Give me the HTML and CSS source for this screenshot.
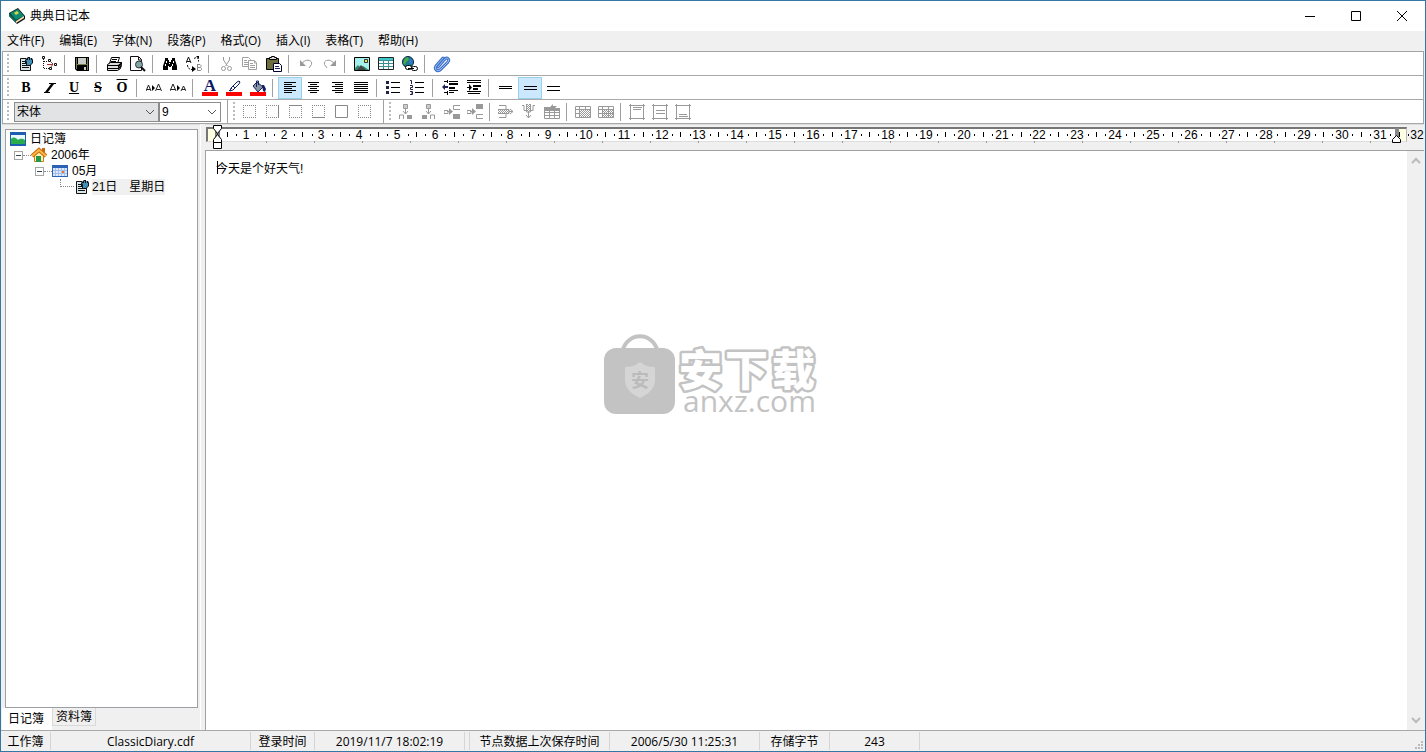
FILE: index.html
```html
<!DOCTYPE html>
<html lang="zh-CN">
<head>
<meta charset="utf-8">
<title>典典日记本</title>
<link rel="stylesheet" href="styles.css">
</head>
<body>
<svg class="defs" aria-hidden="true">
  <defs>
    <pattern id="dither" width="2" height="2" patternUnits="userSpaceOnUse"><path fill="#999" d="M0 0h1v1h-1zM1 1h1v1h-1z"/></pattern>
  </defs>
  <symbol id="i-book" viewBox="0 0 18 18"><path fill="#111" d="M1 6L10 1l7 8v3l-8 5-8-8z"/><path fill="#0d8a72" d="M2 6l8-4 6 7-8 4z"/><path fill="#f4e9b8" d="M8 14l8-5v2l-8 5z"/><path fill="#0a6b5b" d="M1 6l7 7v3L1 9z"/><path fill="#d8d24a" d="M6 6l3-2 2 2-3 2z"/></symbol>
  <symbol id="i-note" viewBox="0 0 16 16"><path fill="#d9e6ea" d="M2 2h11v12H2z"/><path fill="none" stroke="#111" d="M8 2.500H2.500v12h10V9M4 5.500h4M4 7.500h4M4 9.500h5M4 11.500h7"/><path fill="#111" d="M7 4l2-2 1-1h2v1h2l1 2v3l-3 3H8V8H7z"/><path fill="#3f8fb8" d="M8 4h2V2h1v2h1V2h1v2h1v3l-2 2H9V6z"/></symbol>
  <symbol id="i-tree" viewBox="0 0 16 16"><g fill="none" stroke="#111"><path d="M.5.5h2v2h-2zM6.500 3.500h2v2h-2zM12.500 7.500h2v2h-2zM7.500 11.500h2v2h-2z"/><path stroke-dasharray="1 1" d="M1.500 3v10M2 5.500h4M2 12.500h5"/></g><path stroke="#a33" fill="none" d="M5 8.500h6M9 6l2 2-2 3"/></symbol>
  <symbol id="i-save" viewBox="0 0 16 16"><path d="M1 1h14v14H3l-2-2z"/><path fill="#777b46" d="M2 2h1v11H2zM13 2h1v12h-1zM3 8h10v1H3z"/><path fill="#c9cdca" d="M4 2h8v6H4z"/><path fill="#ccc" d="M10 11h2v3h-2z"/></symbol>
  <symbol id="i-print" viewBox="0 0 16 16"><path fill="#fff" stroke="#000" d="M5.500 1.500h8l-2 6h-8z"/><path stroke="#000" d="M6 3.500h5M5 5.500h5"/><path fill="#ddd" stroke="#000" d="M1.500 8.500l3-2h11l-1 6-3 2h-10z"/><path d="M1 9h11v1H1zM12 9l4-3v2l-4 4zM2 12h10v1H2zM12 12l4-3v1l-4 4z"/></symbol>
  <symbol id="i-preview" viewBox="0 0 16 16"><path fill="#fff" stroke="#111" d="M.5.5h8l3 3v11H.5z"/><path fill="none" stroke="#111" d="M8.500 1v3h3"/><circle cx="9" cy="8.500" r="3.500" fill="#82a5a7" stroke="#333"/><path stroke="#111" stroke-width="2" d="M11 11l4 4"/></symbol>
  <symbol id="i-find" viewBox="0 0 16 16"><path d="M3 2h3v2h1v2h2V4h1V2h3v2l1 3 1 3v4h-5v-4H9v1H7v-1H6v4H1v-4l1-3 1-3z"/><path fill="#fff" d="M4 5h1v2h-1zM3 8h1v2h-1zM11 5h1v2h-1zM10 8h1v2h-1zM7 7h1v1h-1z"/></symbol>
  <symbol id="i-replace" viewBox="0 0 16 16"><path fill="none" stroke="#111" d="M0 7l2.500-6L5 7M1 5.500h3"/><path fill="none" stroke="#888" d="M11.500 8.500v6h3l1-1v-1l-1-1h-3M14 11.500l1-1v-1l-1-1h-3"/><path fill="none" stroke="#111" stroke-dasharray="2 1" d="M8 2.500c3-2 5 0 4.500 3M1.500 9c0 3 2 5 6 4.500"/><path d="M10 0h3v3zM6 10l4 3-4 3z"/></symbol>
  <symbol id="i-cut" viewBox="0 0 16 16"><g fill="none" stroke="#999"><path d="M5.500 1v3l4 6M11.500 1v3l-4 6"/><circle cx="5.500" cy="12.500" r="2"/><circle cx="11.500" cy="12.500" r="2"/></g></symbol>
  <symbol id="i-copy" viewBox="0 0 16 16"><g fill="#fff" stroke="#a0a0a0"><path d="M.5 1.500h6l2 2v7h-8z"/><path d="M6.500 4.500h6l2 2v7h-8z"/><path d="M2 4.500h3M2 6.500h4M2 8.500h4M8 7.500h3M8 9.500h5M8 11.500h5M12.500 5v2h2"/></g></symbol>
  <symbol id="i-paste" viewBox="0 0 16 16"><path fill="#6e6e3c" stroke="#000" d="M.5 2.500h12v11H.5z"/><path fill="#ddd" stroke="#000" d="M3.500 3.500v-2h2V.5h3v1h2v2z"/><path fill="#fff" stroke="#003" d="M7.500 7.500h6l2 2v6h-8z"/><path stroke="#226" d="M9 10.500h4M9 12.500h5"/></symbol>
  <symbol id="i-undo" viewBox="0 0 16 16"><path fill="none" stroke="#999" d="M4 7.500c3-5 11-4 9.500 1L11 12"/><path fill="#999" d="M2 4v6h6z"/></symbol>
  <symbol id="i-redo" viewBox="0 0 16 16"><path fill="none" stroke="#999" d="M12 7.500c-3-5-11-4-9.500 1L5 12"/><path fill="#999" d="M14 4v6H8z"/></symbol>
  <symbol id="i-image" viewBox="0 0 16 16"><path fill="#a5f0ea" stroke="#000" d="M.5 1.500h15v13H.5z"/><path fill="#2f8c72" d="M1 12l3-3 3 3 2-2 6 4H1z"/><path fill="#444" d="M3 14l4-5 5 5z"/><path fill="#f3ee45" stroke="#333" d="M10.500 3.500h3v3h-3z"/></symbol>
  <symbol id="i-table" viewBox="0 0 16 16"><path fill="#fff" stroke="#222" d="M.5 1.500h15v12H.5z"/><path fill="#3bc8c8" d="M1 2h14v2H1z"/><path stroke="#398f91" d="M1 4.500h14M1 7.500h14M1 10.500h14M5.500 4v9M10.500 4v9"/></symbol>
  <symbol id="i-link" viewBox="0 0 16 16"><circle cx="6" cy="6" r="5.500" fill="#167b85" stroke="#024"/><path fill="#4aa94f" d="M3 2l3-1 1 3-3 2-1 3-2-2z"/><path fill="#3b75d0" d="M8 2l3 3-1 4-3-2z"/><g fill="#fff" stroke="#000"><rect x="3.500" y="9.500" width="6" height="4" rx="2"/><rect x="9.500" y="10.500" width="6" height="4" rx="2"/></g><path stroke="#000" d="M6 12.500h6"/></symbol>
  <symbol id="i-clip" viewBox="0 0 18 18"><g fill="none" stroke-linecap="round"><path stroke="#3f6fc9" stroke-width="3" d="M5 12l7-8c2-2 5 0 3 3l-8 8c-3 2-6-1-4-4l7-8"/><path stroke="#9fc4f5" d="M5 12l7-8c2-2 5 0 3 3l-8 8c-3 2-6-1-4-4l7-8"/></g></symbol>
  <symbol id="i-italic" viewBox="0 0 16 16"><path d="M7 3h7v1h-2l-6 8h2v1H2v-1h1l6-8H7z"/></symbol>
  <symbol id="i-pen" viewBox="0 0 16 16"><path fill="#fff" stroke="#102060" d="M5 8l6-6 2-1 1 1-1 2-6 6-3 1z"/><path stroke="#102060" d="M3 11l3-3M7 6l2 2"/><path fill="#f00" d="M0 12h16v4H0z"/></symbol>
  <symbol id="i-fill" viewBox="0 0 16 16"><path fill="#8b93a4" stroke="#102060" d="M3 6l4-4 6 5-5 5z"/><path fill="none" stroke="#102060" d="M6.500 7V1h2v4"/><path fill="#102060" d="M12 5h2l2 4-1 3-2-1z"/><path fill="#f00" d="M0 12h16v4H0z"/></symbol>
  <symbol id="i-left" viewBox="0 0 16 16"><path stroke="#000" d="M2 2.500h12M2 4.500h8M2 6.500h12M2 8.500h8M2 10.500h12M2 12.500h8"/></symbol>
  <symbol id="i-center" viewBox="0 0 16 16"><path stroke="#000" d="M2 2.500h11M4 4.500h7M2 6.500h11M4 8.500h7M2 10.500h11M4 12.500h7"/></symbol>
  <symbol id="i-right" viewBox="0 0 16 16"><path stroke="#000" d="M2 2.500h11M5 4.500h8M2 6.500h11M5 8.500h8M2 10.500h11M5 12.500h8"/></symbol>
  <symbol id="i-justify" viewBox="0 0 16 16"><path stroke="#000" d="M0 2.500h14M0 4.500h14M0 6.500h14M0 8.500h14M0 10.500h14M0 12.500h14"/></symbol>
  <symbol id="i-bullets" viewBox="0 0 16 16"><path fill="#224" d="M0 1h3v3H0zM0 6h3v3H0zM0 11h3v3H0z"/><path stroke="#000" d="M5 2.500h9M5 7.500h9M5 12.500h9"/></symbol>
  <symbol id="i-numbers" viewBox="0 0 16 16"><path fill="none" stroke="#224" d="M0 .5h1.500V4M0 5.500h2.500v2H.5v2H3M0 11.500h2.500v3H0M1 13h1"/><path stroke="#000" d="M5 2.500h9M5 7.500h9M5 12.500h9"/></symbol>
  <symbol id="i-outdent" viewBox="0 0 16 16"><path stroke="#000" d="M2 1.500h3M7 1.500h9M7 4.500h9M7 7.500h6M7 10.500h9M2 12.500h3M7 12.500h5M7 3.500h9M7 8.500h6M5.500 0v3M5.500 11v4"/><path fill="#225" d="M0 7l3-3v2h3v2H3v2z"/></symbol>
  <symbol id="i-indent" viewBox="0 0 16 16"><path stroke="#000" d="M1 .5h14M1 2.500h14M7 5.500h8M7 6.500h8M7 8.500h5M7 9.500h5M1 11.500h14M2 13.500h12"/><path d="M1 7h2V4l3 3.500L3 11V8H1z"/></symbol>
  <symbol id="i-line1" viewBox="0 0 16 16"><path stroke="#000" d="M1 6.500h13M1 8.500h13"/></symbol>
  <symbol id="i-line2" viewBox="0 0 16 16"><path stroke="#000" d="M2 6.500h13M2 9.500h13"/></symbol>
  <symbol id="i-line3" viewBox="0 0 16 16"><path stroke="#000" d="M1 6.500h13M1 10.500h13"/></symbol>
  <symbol id="i-box" viewBox="0 0 16 16"><path fill="none" stroke="#888" stroke-dasharray="1 1" d="M1 1.500h13M1 13.500h13M1.500 1v13M13.500 1v13"/></symbol>
  <symbol id="i-split" viewBox="0 0 16 16"><path fill="#ccc" stroke="#999" d="M5.500.5h4v4h-4z"/><path fill="none" stroke="#999" d="M7.500 5v5M5 7l2.500 3L10 7M1.500 15v-4h4v4"/><path fill="#999" d="M9 11h5v4H9z"/></symbol>
  <symbol id="i-split2" viewBox="0 0 16 16"><path fill="#ccc" stroke="#999" d="M5.500.5h4v4h-4z"/><path fill="none" stroke="#999" d="M7.500 5v5M5 7l2.500 3L10 7M9.500 15v-4h4v4"/><path fill="#999" d="M1 11h5v4H1z"/></symbol>
  <symbol id="i-row1" viewBox="0 0 16 16"><path fill="#999" d="M9 10h7v5H9zM5 4l4 3.500L5 11z"/><path fill="none" stroke="#999" d="M0 6.500h4v3H0zM3 7.500h5M16 1.500H9.500v4H16"/></symbol>
  <symbol id="i-row2" viewBox="0 0 16 16"><path fill="#999" d="M9 0h7v5H9zM5 4l4 3.500L5 11z"/><path fill="none" stroke="#999" d="M0 6.500h4v3H0zM3 7.500h5M16 10.500H9.500v4H16"/></symbol>
  <symbol id="i-delrow" viewBox="0 0 16 16"><path fill="none" stroke="#999" d="M1 1.500h7v4M1 13.500h7v-4M0 5.500h11v4H0M11 7.500h4M12 5l3 2.500-3 2.500"/><path fill="url(#dither)" d="M0 6h11v3H0z"/></symbol>
  <symbol id="i-delcol" viewBox="0 0 16 16"><path fill="none" stroke="#999" d="M1 1.500h2v5h2M14 1.500h-2v5h-2M5.500 0v8h4V0M7.500 8v6M5 11l2.500 3L10 11"/><path fill="url(#dither)" d="M6 0h3v8H6z"/></symbol>
  <symbol id="i-deltable" viewBox="0 0 16 16"><path fill="#999" d="M0 3h6l3-3v2h4l-2 2h5v3H0z"/><path fill="none" stroke="#999" d="M.5 4.500h15v10H.5zM0 8.500h16M0 11.500h16M5.500 6v9M10.500 6v9"/></symbol>
  <symbol id="i-merge" viewBox="0 0 16 16"><path fill="none" stroke="#999" d="M.5 2.500h15v11H.5zM0 5.500h16M4.500 2v12M0 9.500h4M10.500 2v3"/><path fill="url(#dither)" d="M5 6h10v7H5z"/></symbol>
  <symbol id="i-cells" viewBox="0 0 16 16"><path fill="none" stroke="#999" d="M.5 2.500h15v11H.5zM0 5.500h16M4.500 2v12M0 9.500h16M10.500 2v12"/><path fill="url(#dither)" d="M5 6h10v7H5z"/></symbol>
  <symbol id="i-top" viewBox="0 0 16 16"><path fill="none" stroke="#999" d="M0 1.500h16M0 14.500h16M1.500 0v16M14.500 0v16M4 3.500h9M4 5.500h8"/></symbol>
  <symbol id="i-middle" viewBox="0 0 16 16"><path fill="none" stroke="#999" d="M0 1.500h16M0 14.500h16M1.500 0v16M14.500 0v16M4 6.500h9M4 9.500h9"/></symbol>
  <symbol id="i-bottom" viewBox="0 0 16 16"><path fill="none" stroke="#999" d="M0 1.500h16M0 14.500h16M1.500 0v16M14.500 0v16M4 10.500h8M4 12.500h9"/></symbol>
  <symbol id="i-diary" viewBox="0 0 16 16"><path fill="#1b5fae" d="M0 1h16v14H0z"/><path fill="#e9f7ff" d="M1 4h14v9H1z"/><path fill="#2aab4c" d="M1 8c3-3 5-1 7 1 3-2 5-1 7 0v4H1z"/></symbol>
  <symbol id="i-home" viewBox="0 0 16 16"><path fill="#fff0b0" stroke="#c77b1c" d="M3.500 8v6.500h9V8L8 4z"/><path fill="#1f9a4a" d="M5 9h5v6H5z"/><path fill="none" stroke="#c66b12" stroke-width="4" d="M1 9l7-6 7 6"/><path fill="none" stroke="#ffb840" stroke-width="2" d="M1 9l7-6 7 6"/><path fill="#c66b12" d="M11 1h3v5l-3-2z"/></symbol>
  <symbol id="i-month" viewBox="0 0 16 16"><path fill="#2d61b5" d="M0 2h16v12H0z"/><path fill="#dce9ff" d="M1 5h14v8H1z"/><path stroke="#a8bde4" d="M3.500 5v8M6.500 5v8M9.500 5v8M12.500 5v8M1 7.500h14M1 10.500h14"/><path fill="#e8743b" d="M10 8h2v2h-2z"/></symbol>
  <symbol id="i-chevron" viewBox="0 0 10 10"><path fill="none" stroke="#555" d="M1 3l4 4 4-4"/></symbol>
</svg>

<div class="window">
  <header class="titlebar">
    <svg class="app-icon"><use href="#i-book"/></svg>
    <h1 class="title">典典日记本</h1>
    <button class="caption" aria-label="最小化"><svg viewBox="0 0 12 12"><path d="M1 6.500h10"/></svg></button>
    <button class="caption" aria-label="最大化"><svg viewBox="0 0 12 12"><path d="M1.500 1.500h9v9h-9z"/></svg></button>
    <button class="caption" aria-label="关闭"><svg viewBox="0 0 12 12"><path d="M1 1l10 10M11 1L1 11"/></svg></button>
  </header>

  <nav class="menubar">
    <button>文件(F)</button><button>编辑(E)</button><button>字体(N)</button><button>段落(P)</button><button>格式(O)</button><button>插入(I)</button><button>表格(T)</button><button>帮助(H)</button>
  </nav>

  <div class="toolbars">
    <div class="bar">
      <span class="grip"></span>
      <button class="tool" aria-label="新建日记"><svg><use href="#i-note"/></svg></button>
      <button class="tool" aria-label="节点"><svg><use href="#i-tree"/></svg></button>
      <span class="sep"></span>
      <button class="tool" aria-label="保存"><svg><use href="#i-save"/></svg></button>
      <span class="sep"></span>
      <button class="tool" aria-label="打印"><svg><use href="#i-print"/></svg></button>
      <button class="tool" aria-label="打印预览"><svg><use href="#i-preview"/></svg></button>
      <span class="sep"></span>
      <button class="tool" aria-label="查找"><svg><use href="#i-find"/></svg></button>
      <button class="tool" aria-label="替换"><svg><use href="#i-replace"/></svg></button>
      <span class="sep"></span>
      <button class="tool" aria-label="剪切"><svg><use href="#i-cut"/></svg></button>
      <button class="tool" aria-label="复制"><svg><use href="#i-copy"/></svg></button>
      <button class="tool" aria-label="粘贴"><svg><use href="#i-paste"/></svg></button>
      <span class="sep"></span>
      <button class="tool" aria-label="撤销"><svg><use href="#i-undo"/></svg></button>
      <button class="tool" aria-label="重做"><svg><use href="#i-redo"/></svg></button>
      <span class="sep"></span>
      <button class="tool" aria-label="图片"><svg><use href="#i-image"/></svg></button>
      <button class="tool" aria-label="表格"><svg><use href="#i-table"/></svg></button>
      <button class="tool" aria-label="超链接"><svg><use href="#i-link"/></svg></button>
      <span class="sep"></span>
      <button class="tool" aria-label="附件"><svg class="large"><use href="#i-clip"/></svg></button>
    </div>
    <div class="bar">
      <span class="grip"></span>
      <button class="tool letter">B</button>
      <button class="tool" aria-label="斜体"><svg><use href="#i-italic"/></svg></button>
      <button class="tool letter underline">U</button>
      <button class="tool letter strike">S</button>
      <button class="tool letter overline">O</button>
      <span class="sep"></span>
      <button class="tool" aria-label="增大字号"><svg viewBox="0 0 16 16"><path fill="none" stroke="#222" d="M0 11l2.500-6L5 11M1 9.500h3M9.500 11l3-7 3 7M10.500 9.500h4"/><path d="M6 5l3 3-3 3z"/></svg></button>
      <button class="tool" aria-label="减小字号"><svg viewBox="0 0 16 16"><path fill="none" stroke="#222" d="M0 11l3-7 3 7M1 9.500h4M11 11l2.500-5 2.500 5M12 9.500h3"/><path d="M7 5l3 3-3 3z"/></svg></button>
      <span class="sep"></span>
      <button class="tool letter color">A</button>
      <button class="tool" aria-label="突出显示"><svg><use href="#i-pen"/></svg></button>
      <button class="tool" aria-label="填充"><svg><use href="#i-fill"/></svg></button>
      <span class="sep"></span>
      <button class="tool active" aria-label="左对齐"><svg><use href="#i-left"/></svg></button>
      <button class="tool" aria-label="居中"><svg><use href="#i-center"/></svg></button>
      <button class="tool" aria-label="右对齐"><svg><use href="#i-right"/></svg></button>
      <button class="tool" aria-label="两端对齐"><svg><use href="#i-justify"/></svg></button>
      <span class="sep"></span>
      <button class="tool" aria-label="项目符号"><svg><use href="#i-bullets"/></svg></button>
      <button class="tool" aria-label="编号"><svg><use href="#i-numbers"/></svg></button>
      <span class="sep"></span>
      <button class="tool" aria-label="减少缩进"><svg><use href="#i-outdent"/></svg></button>
      <button class="tool" aria-label="增加缩进"><svg><use href="#i-indent"/></svg></button>
      <span class="sep"></span>
      <button class="tool" aria-label="单倍行距"><svg><use href="#i-line1"/></svg></button>
      <button class="tool active" aria-label="1.5 倍行距"><svg><use href="#i-line2"/></svg></button>
      <button class="tool" aria-label="双倍行距"><svg><use href="#i-line3"/></svg></button>
    </div>
    <div class="bar narrow">
      <span class="grip"></span>
      <label class="combo family"><select aria-label="字体"><option>宋体</option></select><svg><use href="#i-chevron"/></svg></label>
      <label class="combo size"><select aria-label="字号"><option>9</option></select><svg><use href="#i-chevron"/></svg></label>
      <span class="sep end"></span>
      <span class="grip"></span>
      <button class="tool" aria-label="无边框"><svg><use href="#i-box"/></svg></button>
      <button class="tool" aria-label="右边框"><svg viewBox="0 0 16 16"><use href="#i-box"/><path stroke="#888" d="M13.500 1v13"/></svg></button>
      <button class="tool" aria-label="上边框"><svg viewBox="0 0 16 16"><use href="#i-box"/><path stroke="#888" d="M1 1.500h13"/></svg></button>
      <button class="tool" aria-label="下边框"><svg viewBox="0 0 16 16"><use href="#i-box"/><path stroke="#888" d="M1 13.500h13"/></svg></button>
      <button class="tool" aria-label="全部边框"><svg viewBox="0 0 16 16"><path fill="none" stroke="#888" d="M1.500 1.500h12v12h-12z"/></svg></button>
      <button class="tool" aria-label="清除边框"><svg><use href="#i-box"/></svg></button>
      <span class="sep end"></span>
      <span class="grip"></span>
      <button class="tool" aria-label="左侧插入列"><svg><use href="#i-split"/></svg></button>
      <button class="tool" aria-label="右侧插入列"><svg><use href="#i-split2"/></svg></button>
      <button class="tool" aria-label="上方插入行"><svg><use href="#i-row1"/></svg></button>
      <button class="tool" aria-label="下方插入行"><svg><use href="#i-row2"/></svg></button>
      <span class="sep"></span>
      <button class="tool" aria-label="删除行"><svg><use href="#i-delrow"/></svg></button>
      <button class="tool" aria-label="删除列"><svg><use href="#i-delcol"/></svg></button>
      <button class="tool" aria-label="删除表格"><svg><use href="#i-deltable"/></svg></button>
      <span class="sep"></span>
      <button class="tool" aria-label="合并单元格"><svg><use href="#i-merge"/></svg></button>
      <button class="tool" aria-label="拆分单元格"><svg><use href="#i-cells"/></svg></button>
      <span class="sep"></span>
      <button class="tool" aria-label="顶端对齐"><svg><use href="#i-top"/></svg></button>
      <button class="tool" aria-label="垂直居中"><svg><use href="#i-middle"/></svg></button>
      <button class="tool" aria-label="底端对齐"><svg><use href="#i-bottom"/></svg></button>
    </div>
  </div>

  <main class="main">
    <aside class="sidebar">
      <ul class="tree">
        <li class="node"><svg class="pic"><use href="#i-diary"/></svg><span>日记簿</span></li>
        <li class="node level1"><i class="toggle"></i><i class="dots"></i><svg class="pic"><use href="#i-home"/></svg><span>2006年</span></li>
        <li class="node level2"><i class="toggle"></i><i class="dots"></i><svg class="pic"><use href="#i-month"/></svg><span>05月</span></li>
        <li class="node level3"><i class="elbow"></i><svg class="pic"><use href="#i-note"/></svg><span class="selected">21日　星期日</span></li>
      </ul>
      <div class="tabs"><button class="tab current">日记簿</button><button class="tab">资料簿</button></div>
    </aside>
    <section class="editor">
      <div class="ruler">
        <div class="band"></div>
        <svg class="scale" id="scale"></svg>
        <svg class="marker first" viewBox="0 0 11 25"><path fill="#777" d="M3 6h5v12H3z"/><path fill="#fff" stroke="#000" d="M1.500.5h8v3l-4 5-4-5zM5.500 9.500l4 5v3h-8v-3zM1.500 17.500h8v6h-8z"/></svg>
        <svg class="marker last" viewBox="0 0 11 25"><path fill="#888" d="M4 3h4v11H4z"/><path fill="#fff" stroke="#000" d="M5.500 10.500l4 4v3h-8v-3z"/></svg>
      </div>
      <div class="page">
        <textarea class="text" aria-label="日记内容" spellcheck="false">今天是个好天气!</textarea>
        <div class="scrollbar"><svg viewBox="0 0 10 10"><path d="M1 7l4-4 4 4"/></svg><svg viewBox="0 0 10 10"><path d="M1 3l4 4 4-4"/></svg></div>
      </div>
    </section>
  </main>

  <footer class="status">
    <span class="short">工作簿</span><span class="file">ClassicDiary.cdf</span><span class="label">登录时间</span><span class="time">2019/11/7 18:02:19</span><span class="gap"></span><span class="saved">节点数据上次保存时间</span><span class="time">2006/5/30 11:25:31</span><span class="bytes">存储字节</span><span class="count">243</span>
    <svg class="sizer" viewBox="0 0 8 8"><path d="M6 0h2v2H6zM3 3h2v2H3zM6 3h2v2H6zM0 6h2v2H0zM3 6h2v2H3zM6 6h2v2H6z"/></svg>
  </footer>

  <div class="watermark">
    <svg viewBox="0 0 218 88">
      <path class="handle" d="M18 20C23-1 49-1 54 20"/>
      <rect class="bag" y="16" width="71" height="66" rx="12"/>
      <path class="shield" d="M36 30c5 4 9 5 15 5v13c0 9-7 14-15 18-8-4-15-9-15-18V35c6 0 10-1 15-5z"/>
      <text class="mini" x="36" y="55">安</text>
      <text class="big" x="75 121 168" y="54">安下载</text>
      <text class="site" x="79" y="80">anxz.com</text>
    </svg>
  </div>
</div>
<script src="ruler.js"></script>
</body>
</html>
```
FILE: ruler.js
```js
// Draws a centimetre scale along the ruler, with default tab stops below it.
const scale = document.getElementById('scale');
const CM = 96 / 2.54;
const TAB = 48;

function draw() {
  const width = scale.clientWidth;
  let out = '';
  for (let n = 0; n * CM < width; n++) {
    const at = f => Math.round(3 + (n + f) * CM);
    if (n > 0 && at(0) < width) out += `<text x="${at(0)}" y="14">${n}</text>`;
    if (n > 0) out += `<rect x="${at(0.28)}" y="9" width="1" height="2"/>`;
    out += `<rect x="${at(0.5)}" y="7" width="1" height="5"/>`;
    out += `<rect x="${at(0.74)}" y="9" width="1" height="2"/>`;
  }
  for (let x = 61; x < width - 24; x += TAB) out += `<rect class="stop" x="${x}" y="16" width="1" height="2"/>`;
  scale.innerHTML = out;
}

draw();
addEventListener('resize', draw);
```
FILE: styles.css
```css
* { box-sizing: border-box; }
body { margin: 0; color: #000; font: 12px/16px "Open Sans", "Noto Sans CJK SC", sans-serif; }
button, select, textarea { margin: 0; padding: 0; border: 0; border-radius: 0; background: none; color: inherit; font: inherit; }
.defs { position: absolute; width: 0; height: 0; }

.window { position: relative; display: flex; flex-direction: column; height: 100vh; border: 1px solid #3577a3; background: #f0f0f0; }

.titlebar { display: flex; align-items: center; height: 30px; padding-left: 7px; background: #fff; }
.app-icon { width: 18px; height: 18px; margin-right: 4px; }
.title { flex: 1; margin: 0; font-size: 12px; font-weight: 400; }
.caption { display: flex; align-items: center; justify-content: center; width: 46px; height: 30px; }
.caption svg { width: 12px; height: 12px; fill: none; stroke: #000; }

.menubar { display: flex; align-items: center; height: 20px; }
.menubar button { padding: 0 7px 0 8px; white-space: nowrap; }
.menubar button:first-child { padding-left: 6px; }

.toolbars { margin: 0 1px; border: 1px solid #a3a3a3; border-bottom: 0; background: #fff; }
.bar { display: flex; align-items: center; height: 24px; border-bottom: 1px solid #a9a9a9; }
.grip { width: 2px; height: 19px; margin: 0 5px 0 4px; background: repeating-linear-gradient(#bbb 0 2px, #fff 2px 4px); }
.sep { width: 8px; height: 18px; background: linear-gradient(#a0a0a0, #a0a0a0) 2px 0 / 1px 100% no-repeat; }
.sep.end { height: 23px; margin-left: 4px; }
.sep.end + .grip { margin: 0 4px 0 0; }
.tool { display: flex; flex: none; align-items: center; align-self: flex-end; justify-content: center; width: 24px; height: 22px; }
.narrow .tool { justify-content: flex-start; width: 23px; padding-left: 3px; }
.tool svg { width: 16px; height: 16px; }
.tool svg.large { width: 18px; height: 18px; }
.tool.active { border: 1px solid #99d1ea; background: #cce8ff; }
.letter { font: bold 14px/16px "Liberation Serif", serif; }
.underline { text-decoration: underline; }
.strike { text-decoration: line-through; }
.overline { text-decoration: overline; }
.color { position: relative; padding-bottom: 4px; color: #0c1764; font-size: 17px; }
.color::before { content: ""; position: absolute; left: 4px; bottom: 3px; width: 16px; height: 4px; background: #f00; }

.combo { position: relative; display: flex; height: 20px; border: 1px solid #8c8c8c; font-family: "Liberation Sans", "Noto Sans CJK SC", sans-serif; }
.combo select { flex: 1; min-width: 0; padding-left: 2px; appearance: none; }
.combo svg { position: absolute; right: 3px; top: 4px; width: 10px; height: 10px; pointer-events: none; }
.family { width: 145px; background: #e1e3e4; }
.size { width: 62px; }

.main { display: flex; flex: 1; min-height: 0; margin: 0 1px; }
.sidebar { display: flex; flex-direction: column; width: 199px; padding: 4px 2px 0 3px; border-top: 1px solid #ddd; border-right: 1px solid #fff; }
.tree { flex: 1; margin: 0; padding: 1px 4px; border: 1px solid #9b9fa3; background: #fff; list-style: none; }
.node { display: flex; align-items: center; height: 16px; font-family: "Liberation Sans", "Noto Sans CJK SC", sans-serif; white-space: nowrap; }
.pic { flex: none; width: 16px; height: 16px; margin-right: 4px; }
.level1 { padding-left: 4px; }
.level2 { padding-left: 25px; }
.level3 { padding-left: 50px; }
.level3 .pic { margin-right: 2px; }
.toggle { flex: none; width: 9px; height: 9px; border: 1px solid #a4a4a4; background: linear-gradient(#345, #345) 1px 3px / 5px 1px no-repeat; }
.dots { width: 8px; border-top: 1px dotted #888; }
.elbow { width: 14px; height: 8px; margin-bottom: 8px; border: dotted #888; border-width: 0 0 1px 1px; }
.selected { background: #f0f0f0; }
.tabs { display: flex; align-items: flex-start; height: 22px; margin-left: -3px; }
.tab { height: 18px; padding: 0 3px; border: 1px solid #d9d9d9; border-top: 0; font-family: "Liberation Sans", "Noto Sans CJK SC", sans-serif; }
.tab.current { height: 22px; padding: 0 8px 0 6px; border: 0; background: #fff; }

.editor { display: flex; flex: 1; flex-direction: column; min-width: 0; padding-left: 4px; }
.ruler { position: relative; height: 26px; border-top: 1px solid #ddd; overflow: hidden; }
.band { height: 15px; margin: 2px 17px 0 1px; border: 1px solid; border-width: 2px 1px 1px 2px; border-color: #777 #bbb #ddd #777; background: linear-gradient(#ffffe1, #ffffe1) 0 0 / 8px 100% no-repeat, linear-gradient(#ffffe1, #ffffe1) 100% 0 / 8px 100% no-repeat, #fff; }
.scale { position: absolute; inset: 0; width: 100%; height: 100%; font: 12px "Liberation Sans", sans-serif; text-anchor: middle; }
.scale .stop { fill: #999; }
.marker { position: absolute; top: 0; width: 11px; height: 25px; }
.marker.first { left: 7px; }
.marker.last { right: 22px; }
.page { display: flex; flex: 1; min-height: 0; border: 1px solid #a0a0a0; border-width: 1px 0 0 1px; background: #fff; position: relative; }
.page::before { content: ""; position: absolute; left: 11px; top: 10px; width: 1px; height: 13px; background: #000; }
.text { flex: 1; padding: 10px; outline: 0; resize: none; font-family: "Liberation Sans", "Noto Sans CJK SC", sans-serif; }
.scrollbar { display: flex; flex-direction: column; align-items: center; justify-content: space-between; width: 17px; padding: 5px 0; background: #f0f0f0; }
.scrollbar svg { width: 10px; height: 10px; fill: none; stroke: #bbb; stroke-width: 2; }

.status { display: flex; height: 21px; border-top: 1px solid #a8a8a8; }
.status span { height: 18px; margin-top: 1px; border-right: 1px solid #d5d5d5; line-height: 20px; text-align: center; white-space: nowrap; }
.short { width: 50px; }
.file { width: 200px; }
.label { width: 64px; }
.time { width: 150px; }
.gap { width: 5px; }
.saved { width: 140px; }
.bytes { width: 70px; }
.count { width: 90px; }
.sizer { align-self: flex-end; width: 8px; height: 8px; margin: 0 2px 2px auto; fill: #bbb; }

.watermark { position: absolute; inset: 0; display: flex; align-items: center; justify-content: center; pointer-events: none; }
.watermark svg { width: 218px; height: 88px; overflow: visible; }
.handle { fill: none; stroke: #c3c3c3; stroke-width: 4; }
.bag { fill: #c3c3c3; }
.shield { fill: #d5d5d5; }
.mini { fill: #bbb; font: bold 18px "Noto Sans CJK SC", sans-serif; text-anchor: middle; }
.big { fill: #fff; stroke: #c3c3c3; stroke-width: 5; stroke-linejoin: round; paint-order: stroke; font: 900 43px "Noto Sans CJK SC", sans-serif; }
.site { fill: #c3c3c3; font: 30px "Open Sans", sans-serif; }
```
